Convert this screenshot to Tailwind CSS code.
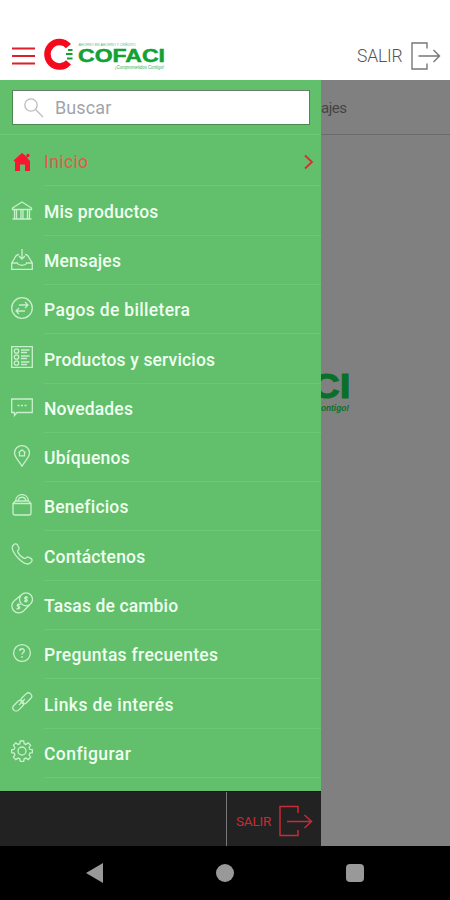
<!DOCTYPE html>
<html lang="es">
<head>
<meta charset="utf-8">
<title>COFACI</title>
<script src="https://cdn.jsdelivr.net/npm/@tailwindcss/browser@4"></script>
</head>
<body class="bg-white">
<div class="relative flex h-[900px] w-[450px] flex-col overflow-hidden bg-white font-['Roboto',sans-serif]">
  <header class="flex h-20 shrink-0 items-start pt-[38px] pl-3">
    <svg class="mt-[9px] h-[18px] w-[23px]" viewBox="0 0 23 18" stroke="#d9202c" stroke-width="2"><path d="M0 1.500h23M0 9h23M0 16.500h23"/></svg>
    <svg class="ml-1.5 h-8 w-[126px] overflow-visible" viewBox="0 0 126 32" fill="none">
      <path d="M27.500 8.200A12 12.300 0 1 0 27.500 24.300" stroke="#f5091c" stroke-width="6.500"/>
      <path d="M27 12h4.500M25 16h6.500M26 20.500h5.500" stroke="#12a132" stroke-width="1.800"/>
      <text x="37.500" y="7.500" fill="#58bd6b" font-family="Liberation Sans" font-size="4" textLength="57" lengthAdjust="spacingAndGlyphs">AHORRO EN AHORRO Y CRÉDITO</text>
      <text x="37" y="24" fill="#12a132" stroke="#12a132" stroke-width=".5" font-family="Liberation Sans" font-weight="bold" font-size="18.500" textLength="87" lengthAdjust="spacingAndGlyphs">COFACI</text>
      <text x="74" y="30.500" fill="#35ae50" font-family="Liberation Sans" font-style="italic" font-size="4.500" textLength="49" lengthAdjust="spacingAndGlyphs">¡Comprometidos Contigo!</text>
    </svg>
    <span class="ml-[190px] mt-1.5 text-[17.5px] leading-6 font-light tracking-[-0.2px] text-[#555]">SALIR</span>
    <svg class="ml-[9px] mt-1 h-7 w-[30px] shrink-0" viewBox="0 0 30 28" fill="none" stroke="#777" stroke-width="1.400"><path d="M16 6.500V1H1v26h15v-5.500M7.500 14H28M22.500 8l6 6-6 6"/></svg>
  </header>

  <div class="flex h-[766px] shrink-0">
    <aside class="flex w-[321px] shrink-0 flex-col bg-[#62bf6b]">
      <div class="h-[55px] border-b border-[#6dc776] pl-3 pt-2.5">
        <div class="flex h-[35px] w-[298px] items-center border border-[#4c8a50] border-t-[#67806a] bg-white pl-[11px]">
          <svg class="h-5 w-5" viewBox="0 0 20 20" fill="none" stroke="#b9bbbd" stroke-width="1.300"><circle cx="7" cy="7" r="6.200"/><path d="M11.500 11.500l7.500 7.500"/></svg>
          <span class="ml-[11px] text-[18px] tracking-[0.1px] text-[#a2a4a8]">Buscar</span>
        </div>
      </div>
      <nav class="flex h-[656px] flex-col text-[17.5px] font-medium text-[#effff0]">
        <a class="flex h-[51.400px] shrink-0 items-center pl-[11px] text-[#e0594b]">
          <svg class="mt-0.5 h-[22px] w-[22px]" viewBox="0 0 22 22" fill="#fa1530"><path d="M2.500 9.500L11 2l5 4 2 3.500h1V20h-5v-6.500H9V20H4V10.500z"/><circle cx="17" cy="4.500" r="1.700"/></svg>
          <span class="ml-[11px] flex h-full flex-1 items-center border-b border-[#6dc776] font-normal tracking-[0.400px]"><span class="flex-1 pt-1">Inicio</span>
          <svg class="mr-2 mt-1 h-4 w-[9px]" viewBox="0 0 9 16" fill="none" stroke="#dc2b32" stroke-width="1.800"><path d="M1 1.500L8 8l-7 6.500"/></svg></span>
        </a>
        <a class="flex h-[49.300px] shrink-0 items-center pl-[11px]">
          <svg class="h-[22px] w-[22px]" viewBox="0 0 22 22" fill="none" stroke="#c9f0cc" stroke-width="1.300"><path d="M1.500 8L11 2l9.500 6v1.500h-19zM3.500 9.500v9M5.500 9.500v9M10 9.500v9M12 9.500v9M16.500 9.500v9M18.500 9.500v9M1.500 19h19"/></svg>
          <span class="ml-[11px] flex h-full flex-1 items-center border-b border-[#6dc776] pt-[3px] tracking-[0.180px]">Mis productos</span>
        </a>
        <a class="flex h-[49.300px] shrink-0 items-center pl-[11px]">
          <svg class="h-[22px] w-[22px]" viewBox="0 0 22 22" fill="none" stroke="#c9f0cc" stroke-width="1.300"><path d="M11 0v10M8 7l3 3 3-3M8 5.500C5 5.500 4.500 7 3.500 9.500L.700 14v6.300h20.600V14l-2.800-4.500C17.500 7 17 5.500 14 5.500M1 14h5.500c.500 3 8.500 3 9 0H21"/></svg>
          <span class="ml-[11px] flex h-full flex-1 items-center border-b border-[#6dc776] pt-0.5 tracking-[0.180px]">Mensajes</span>
        </a>
        <a class="flex h-[49.300px] shrink-0 items-center pl-[11px]">
          <svg class="-mt-1 h-[22px] w-[22px]" viewBox="0 0 22 22" fill="none" stroke="#c9f0cc" stroke-width="1.300"><circle cx="11" cy="11" r="10.300"/><path d="M8 8h9M14 5l3 3-3 3M14 14H5M8 11l-3 3 3 3"/></svg>
          <span class="ml-[11px] flex h-full flex-1 items-center border-b border-[#6dc776] pt-0.5 tracking-[0.330px]">Pagos de billetera</span>
        </a>
        <a class="flex h-[49.300px] shrink-0 items-center pl-[11px]">
          <svg class="-mt-1 h-[22px] w-[22px]" viewBox="0 0 22 22" fill="none" stroke="#c9f0cc" stroke-width="1.300"><path d="M.7.7h20.600v20.600H.7zM10 4h8.500M10 6.500h6M10 10h8.500M10 12.500h6M10 16h8.500M10 18.500h6"/><circle cx="5.500" cy="5" r="2.200"/><circle cx="5.500" cy="11" r="2.200"/><circle cx="5.500" cy="17" r="2.200"/></svg>
          <span class="ml-[11px] flex h-full flex-1 items-center border-b border-[#6dc776] pt-[3px] tracking-[0.150px]">Productos y servicios</span>
        </a>
        <a class="flex h-[49.300px] shrink-0 items-center pl-[11px]">
          <svg class="-mt-0.5 h-[22px] w-[22px]" viewBox="0 0 22 22" fill="none" stroke="#c9f0cc" stroke-width="1.300"><path d="M.7 3h20.600v13.500H6l-2.500 3v-3H.7z"/><path d="M6.500 9.500h2M10 9.500h2M13.500 9.500h2" stroke-width="1.700"/></svg>
          <span class="ml-[11px] flex h-full flex-1 items-center border-b border-[#6dc776] pt-0.5 tracking-[0.150px]">Novedades</span>
        </a>
        <a class="flex h-[49.300px] shrink-0 items-center pl-[11px]">
          <svg class="-mt-1 h-[22px] w-[22px]" viewBox="0 0 22 22" fill="none" stroke="#c9f0cc" stroke-width="1.300"><path d="M11 21.300C9 17 3.500 12.500 3.500 8a7.500 7.300 0 0 1 15 0c0 4.500-5.500 9-7.500 13.300z"/><path d="M7.500 7.800l3.500-3 3.500 3M8.500 7v3.800h5V7"/></svg>
          <span class="ml-[11px] flex h-full flex-1 items-center border-b border-[#6dc776] pt-0.5 tracking-[0.280px]">Ubíquenos</span>
        </a>
        <a class="flex h-[49.300px] shrink-0 items-center pl-[11px]">
          <svg class="-mt-1 h-[22px] w-[22px]" viewBox="0 0 22 22" fill="none" stroke="#c9f0cc" stroke-width="1.300"><path d="M2 9.500l2.500-2.500h13L20 9.500V19q0 2-2 2H4q-2 0-2-2zM2 9.500h18M4.500 7c1-8.500 12-8.500 13 0M7 7c1-5 7-5 8 0"/></svg>
          <span class="ml-[11px] flex h-full flex-1 items-center border-b border-[#6dc776] pt-0.5 tracking-[0.200px]">Beneficios</span>
        </a>
        <a class="flex h-[49.300px] shrink-0 items-center pl-[11px]">
          <svg class="-mt-1 h-[22px] w-[22px]" viewBox="0 0 22 22" fill="none" stroke="#c9f0cc" stroke-width="1.300"><path d="M2 2.500C3.500.500 5.500.500 6.500 2L8 5c.600 1.500-2 2.500-1.300 4 1.300 2.800 4 5.200 6.500 6.300 1.500.700 2.600-1.900 4-1.300l3 1.600c1.500 1 1 2.800-.7 4.200-2.700 2.500-7.500.200-12-4.300S-.3 5 2 2.500z"/></svg>
          <span class="ml-[11px] flex h-full flex-1 items-center border-b border-[#6dc776] pt-[3px] tracking-[0.180px]">Contáctenos</span>
        </a>
        <a class="flex h-[49.300px] shrink-0 items-center pl-[11px]">
          <svg class="-mt-1 h-[22px] w-[22px]" viewBox="0 0 22 22" fill="none" stroke="#c9f0cc" stroke-width="1.300"><circle cx="15" cy="7.300" r="6.500"/><path d="M9.500 3.500L3 9a6.700 6.700 0 1 0 9.500 10l6-6"/><path d="M9.500 12.500c-4-1-4 1.500-2 2s2 3-2 2M7.500 11.500v6M17 5.500c-4-1-4 1.300-2 1.800s2 2.700-2 1.700M15 4v6.500"/></svg>
          <span class="ml-[11px] flex h-full flex-1 items-center border-b border-[#6dc776] pt-0.5 tracking-[0.120px]">Tasas de cambio</span>
        </a>
        <a class="flex h-[49.300px] shrink-0 items-center pl-[11px]">
          <svg class="-mt-1 h-[22px] w-[22px]" viewBox="0 0 22 22" fill="none" stroke="#c9f0cc" stroke-width="1.300"><circle cx="11" cy="11" r="8.400"/><path d="M8.700 9c0-3 4.600-3 4.600-.300 0 1.800-2.300 1.700-2.300 3.800M11 14v1.700" stroke-width="1.400"/></svg>
          <span class="ml-[11px] flex h-full flex-1 items-center border-b border-[#6dc776] pt-0.5 tracking-[0.300px]">Preguntas frecuentes</span>
        </a>
        <a class="flex h-[49.300px] shrink-0 items-center pl-[11px]">
          <svg class="-mt-1 h-[22px] w-[22px]" viewBox="0 0 22 22" fill="none" stroke="#c9f0cc" stroke-width="1.300"><rect x="9" y="4" width="12.500" height="6.600" rx="3.300" transform="rotate(-45 15.250 7.300)"/><rect x="1" y="11.400" width="12.500" height="6.600" rx="3.300" transform="rotate(-45 7.250 14.700)"/><path d="M8 14l6-6"/></svg>
          <span class="ml-[11px] flex h-full flex-1 items-center border-b border-[#6dc776] pt-[3px] tracking-[0.400px]">Links de interés</span>
        </a>
        <a class="flex h-[49.300px] shrink-0 items-center pl-[11px]">
          <svg class="-mt-1 h-[22px] w-[22px]" viewBox="0 0 22 22" fill="none" stroke="#c9f0cc" stroke-width="1.300"><path d="M9.300 1h3.400l.5 2.700 1.700.7 2.300-1.500 2.400 2.400-1.500 2.200.7 1.800 2.600.5v2.800l-2.600.500-.7 1.800 1.500 2.300-2.400 2.400-2.300-1.500-1.700.7-.5 2.500H9.300l-.5-2.500-1.700-.7-2.300 1.500-2.400-2.400 1.500-2.300-.7-1.800-2.600-.500V9.800l2.600-.5.7-1.800-1.500-2.200 2.400-2.400 2.300 1.500 1.700-.7z"/><circle cx="11" cy="11" r="4"/></svg>
          <span class="ml-[11px] flex h-full flex-1 items-center border-b border-[#6dc776] pt-0.5 tracking-[0.450px]">Configurar</span>
        </a>
      </nav>
      <div class="flex h-[55px] border-t border-[#161616] bg-[#222]">
        <div class="w-[226px]"></div>
        <div class="flex flex-1 items-center border-l border-[#777] pl-[9px] text-[#c92a34]">
          <span class="w-[43px] pt-1 text-[13.5px] tracking-[-0.2px]">SALIR</span>
          <svg class="mt-1 h-8 w-[34px]" viewBox="0 0 34 32" fill="none" stroke="#c92a34" stroke-width="1.500"><path d="M19 8V1.500H1v29h18V25M8 16.500h24.500M25.500 10l7 6.500-7 6.500"/></svg>
        </div>
      </div>
    </aside>
    <main class="flex-1 overflow-hidden bg-[#808080]">
      <div class="h-[55px] border-b border-[#6b6b6b] pt-[18px] text-[15px] leading-5 tracking-[-0.5px] text-[#454545]">ajes</div>
      <svg class="mt-[235px] h-12 w-[32px]" viewBox="0 0 32 48" fill="#0a6f28">
        <text x="-9" y="28" font-family="Liberation Sans" font-weight="bold" font-size="35" stroke="#0a6f28" textLength="38.500" lengthAdjust="spacingAndGlyphs">CI</text>
        <text x="0" y="41" font-family="Liberation Sans" font-weight="bold" font-style="italic" font-size="8.500" textLength="28" lengthAdjust="spacingAndGlyphs">ontigo!</text>
      </svg>
    </main>
  </div>

  <footer class="flex h-[54px] shrink-0 items-center justify-between bg-black px-[86px]">
    <svg class="h-5 w-[18px]" viewBox="0 0 18 20" fill="#999"><path d="M17 0v20L0 10z"/></svg>
    <div class="h-[18px] w-[18px] rounded-full bg-[#999]"></div>
    <div class="h-[18px] w-[18px] rounded-sm bg-[#999]"></div>
  </footer>
</div>
</body>
</html>
